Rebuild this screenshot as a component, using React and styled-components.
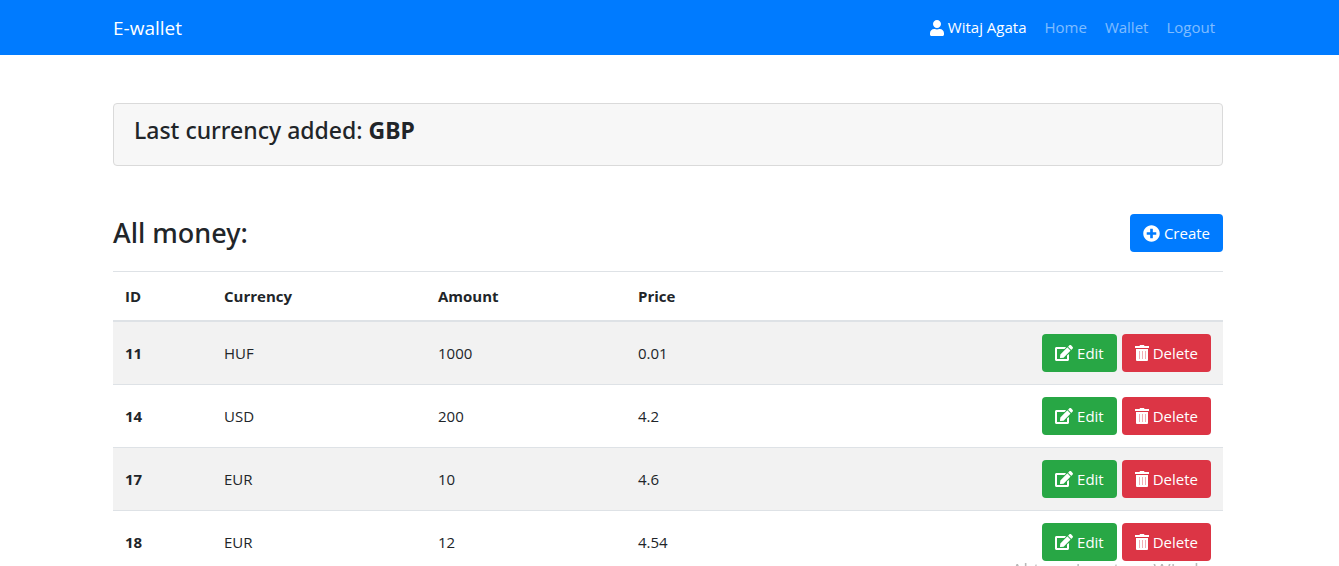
import React from "react";
import styled, { createGlobalStyle } from "styled-components";
import { FaUser, FaPlusCircle, FaEdit } from "react-icons/fa";

const GlobalStyle = createGlobalStyle`
  *, *::before, *::after { box-sizing: border-box; }
  body {
    margin: 0;
    overflow-x: hidden;
    background: #fff;
    color: #212529;
    font: 400 15px/24px "Open Sans", "Noto Sans", sans-serif;
  }
`;

const Container = styled.div`
  width: 100%;
  max-width: 1140px;
  margin: 0 auto;
  padding: 0 15px;
`;

const Page = styled.div`
  padding-right: 3px;
`;

const Navbar = styled.nav`
  background: #007bff;
  padding: 8px 3px 8px 0;
`;

const NavRow = styled(Container)`
  display: flex;
  align-items: center;
  justify-content: space-between;
`;

const Brand = styled.a`
  color: #fff;
  font-size: 19px;
  line-height: 30px;
  text-decoration: none;
`;

const NavList = styled.ul`
  display: flex;
  gap: 2px;
  margin: 0;
  padding: 0;
  list-style: none;
`;

const NavLink = styled.a`
  display: flex;
  align-items: center;
  gap: 3px;
  padding: 8px;
  line-height: 23px;
  text-decoration: none;
  color: ${(p) => (p.$active ? "#fff" : "rgba(255, 255, 255, 0.5)")};
`;

const Card = styled.section`
  margin-top: 48px;
  padding: 12px 20px;
  border: 1px solid #dadada;
  border-radius: 4px;
  background: #f7f7f7;
`;

const CardTitle = styled.h4`
  margin: 0 0 8px;
  font-family: "Noto Sans", "Open Sans", sans-serif;
  font-size: 23px;
  line-height: 29px;
  font-weight: 500;
`;

const Heading = styled.div`
  display: flex;
  align-items: center;
  justify-content: space-between;
  margin: 48px 0 19px;
`;

const Title = styled.h3`
  margin: 0;
  font-family: "Noto Sans", "Open Sans", sans-serif;
  font-size: 27px;
  line-height: 34px;
  font-weight: 500;
`;

const colors = { primary: "#007bff", success: "#28a745", danger: "#dc3545" };

const Button = styled.button`
  display: inline-flex;
  align-items: center;
  gap: 4px;
  height: 38px;
  padding: 0 13px;
  border: 0;
  border-radius: 4px;
  background: ${(p) => colors[p.$kind]};
  color: #fff;
  font: inherit;
  cursor: pointer;
`;

const Table = styled.table`
  width: 100%;
  table-layout: fixed;
  border-collapse: collapse;
  text-align: left;
`;

const HeadCell = styled.th`
  width: ${(p) => p.$width};
  padding: 12px;
  border-top: 1px solid #dee2e6;
  border-bottom: 2px solid #dee2e6;
  font-weight: 700;
`;

const Row = styled.tr`
  background: ${(p) => (p.$striped ? "#f2f2f2" : "#fff")};
`;

const Cell = styled.td`
  padding: 12px;
  border-top: 1px solid #dee2e6;
  font-weight: ${(p) => (p.$bold ? 700 : 400)};
`;

const Actions = styled.div`
  display: flex;
  justify-content: flex-end;
  gap: 5px;
`;

const Watermark = styled.div`
  position: fixed;
  right: 105px;
  bottom: -18px;
  color: #b8b8b8;
  font-size: 19px;
  line-height: 28px;
  white-space: nowrap;
  pointer-events: none;
`;

const TrashIcon = () => (
  <svg width="14" height="16" viewBox="0 0 14 16" fill="currentColor" aria-hidden="true">
    <path d="M0 1h4.500l.5-1h4l.5 1H14v2H0z" />
    <path d="M1 4h12v11a1 1 0 0 1-1 1H2a1 1 0 0 1-1-1z" />
    <path d="M4.500 6v8M7.500 6v8M10.500 6v8" stroke="#dc3545" strokeOpacity="0.4" strokeWidth="1" />
  </svg>
);

const links = ["Home", "Wallet", "Logout"];

const rows = [
  [11, "HUF", "1000", "0.01"],
  [14, "USD", "200", "4.2"],
  [17, "EUR", "10", "4.6"],
  [18, "EUR", "12", "4.54"],
];

export default function App() {
  return (
    <>
      <GlobalStyle />
      <Navbar>
        <NavRow>
          <Brand href="#">E-wallet</Brand>
          <NavList>
            <li>
              <NavLink href="#" $active>
                <FaUser size={16} />
                Witaj Agata
              </NavLink>
            </li>
            {links.map((label) => (
              <li key={label}>
                <NavLink href="#">{label}</NavLink>
              </li>
            ))}
          </NavList>
        </NavRow>
      </Navbar>
      <Page>
        <Container as="main">
          <Card>
            <CardTitle>
              Last currency added: <strong>GBP</strong>
            </CardTitle>
          </Card>
          <Heading>
            <Title>All money:</Title>
            <Button $kind="primary">
              <FaPlusCircle size={17} />
              Create
            </Button>
          </Heading>
          <Table>
            <thead>
              <tr>
                <HeadCell $width="99px">ID</HeadCell>
                <HeadCell $width="214px">Currency</HeadCell>
                <HeadCell $width="200px">Amount</HeadCell>
                <HeadCell>Price</HeadCell>
                <HeadCell aria-label="Actions" />
              </tr>
            </thead>
            <tbody>
              {rows.map(([id, currency, amount, price], i) => (
                <Row key={id} $striped={i % 2 === 0}>
                  <Cell as="th" scope="row" $bold>{id}</Cell>
                  <Cell>{currency}</Cell>
                  <Cell>{amount}</Cell>
                  <Cell>{price}</Cell>
                  <Cell>
                    <Actions>
                      <Button $kind="success">
                        <FaEdit size={18} />
                        Edit
                      </Button>
                      <Button $kind="danger">
                        <TrashIcon />
                        Delete
                      </Button>
                    </Actions>
                  </Cell>
                </Row>
              ))}
            </tbody>
          </Table>
        </Container>
      </Page>
      <Watermark>Aktywuj system Windows</Watermark>
    </>
  );
}
